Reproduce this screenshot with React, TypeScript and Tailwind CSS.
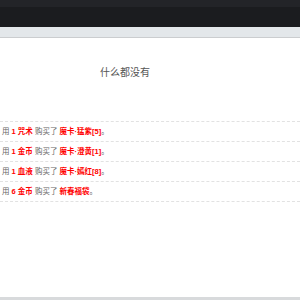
import React from 'react';

type Row = { cost: string; unit: string; item: string };

const rows: Row[] = [
  { cost: '1', unit: '咒术', item: '魔卡·猛紫[5]' },
  { cost: '1', unit: '金币', item: '魔卡·澄黄[1]' },
  { cost: '1', unit: '血液', item: '魔卡·嫣红[8]' },
  { cost: '6', unit: '金币', item: '新春福袋' },
];

const font = { fontFamily: '"Liberation Sans", "Noto Sans CJK SC", sans-serif' };

export default function App() {
  return (
    <div className="w-[300px] h-[300px] flex flex-col bg-white overflow-hidden" style={font}>
      {/* browser chrome */}
      <div className="h-[7px] bg-[#232428]" />
      <div className="h-[20px] bg-[#1b1c1f]" />
      <div className="h-[11px] bg-[#e3e7ea] border-b border-[#cbcdcf]" />

      <div className="flex-1 flex flex-col">
        <div className="flex justify-center pr-[50px] pt-[28px] h-[83px]">
          <span className="text-[10px] leading-[14px] text-[#555]">什么都没有</span>
        </div>

        <ul className="border-t border-dashed border-[#e2e2e2]">
          {rows.map((r, i) => (
            <li
              key={i}
              className="h-[20px] flex items-center pl-[2px] border-b border-dashed border-[#e2e2e2] text-[7.5px] text-[#666] whitespace-pre"
            >
              用 <b className="text-[#f00]">{r.cost} {r.unit}</b> 购买了 <b className="text-[#f00]">{r.item}</b>。
            </li>
          ))}
        </ul>
      </div>

      <div className="h-[3px] bg-[#d8dadc]" />
    </div>
  );
}
